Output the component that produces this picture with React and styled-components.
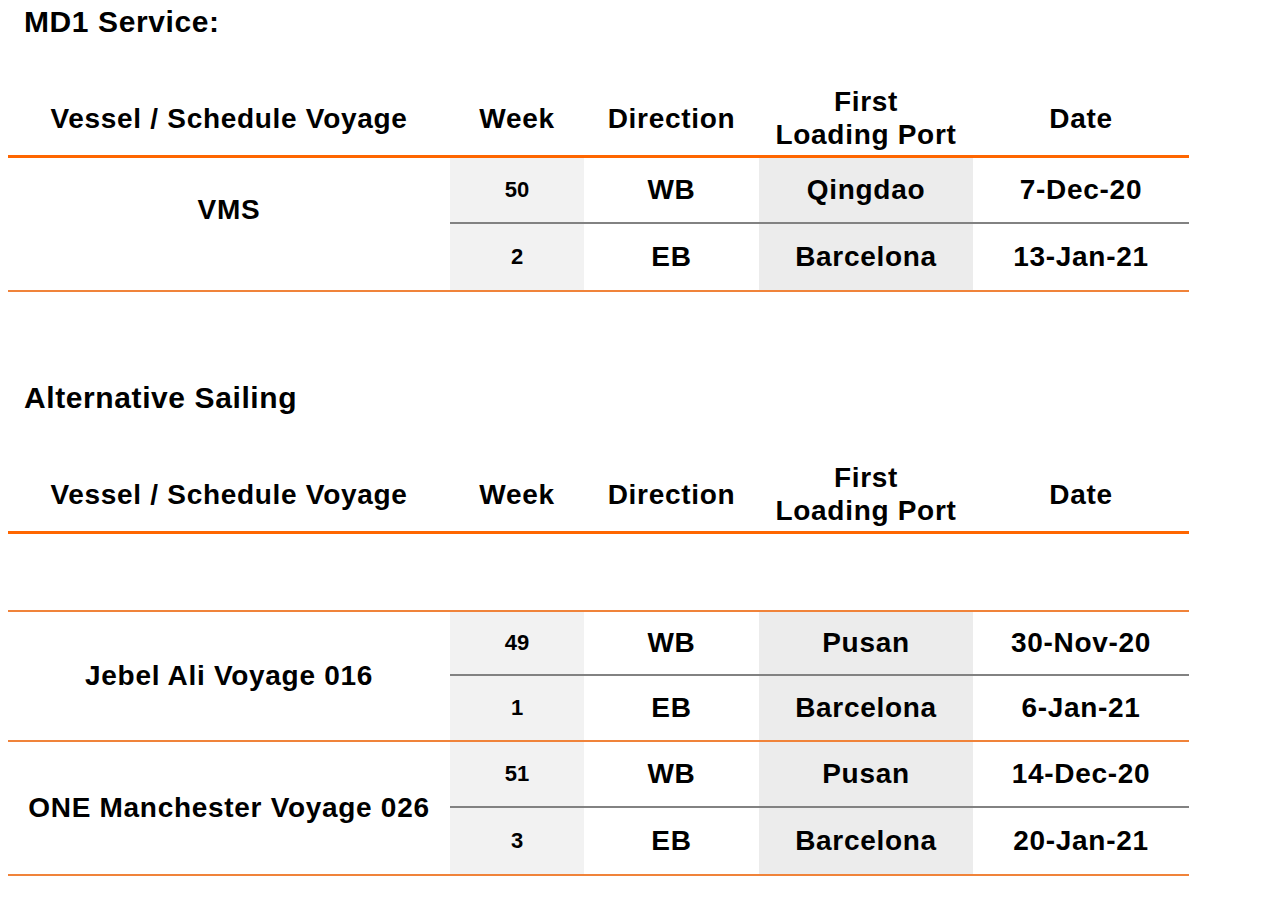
import styled, { createGlobalStyle } from "styled-components";

const GlobalStyle = createGlobalStyle`
  html, body {
    margin: 0;
    padding: 0;
    background: #ffffff;
  }
  body {
    font-family: "Liberation Sans", Arial, sans-serif;
    color: #000;
  }
`;

const columns = "442px 134px 175px 214px 216px";

const mdService = [
    {
        vessel: "VMS",
        raised: true,
        rowHeight: 66,
        legs: [
            { week: "50", dir: "WB", port: "Qingdao", date: "7-Dec-20" },
            { week: "2", dir: "EB", port: "Barcelona", date: "13-Jan-21" },
        ],
    },
];

const alternatives = [
    {
        vessel: "Jebel Ali Voyage 016",
        rowHeight: 64,
        legs: [
            { week: "49", dir: "WB", port: "Pusan", date: "30-Nov-20" },
            { week: "1", dir: "EB", port: "Barcelona", date: "6-Jan-21" },
        ],
    },
    {
        vessel: "ONE Manchester Voyage 026",
        rowHeight: 66,
        legs: [
            { week: "51", dir: "WB", port: "Pusan", date: "14-Dec-20" },
            { week: "3", dir: "EB", port: "Barcelona", date: "20-Jan-21" },
        ],
    },
];

const ScheduleTable = ( { groups, spacer } ) => (
    <Table>
        <HeadRow>
            <HeadCell>Vessel / Schedule Voyage</HeadCell>
            <HeadCell>Week</HeadCell>
            <HeadCell>Direction</HeadCell>
            <HeadCell>First<br />Loading Port</HeadCell>
            <HeadCell>Date</HeadCell>
        </HeadRow>
        {spacer && <Spacer />}
        {groups.map( group => (
            <Group key={group.vessel} $rowHeight={group.rowHeight}>
                <VesselCell $raised={group.raised}>{group.vessel}</VesselCell>
                {group.legs.map( ( leg, i ) => {
                    const divided = i < group.legs.length - 1;
                    return [
                        <WeekCell key={`w${i}`} $divided={divided}>{leg.week}</WeekCell>,
                        <Cell key={`d${i}`} $divided={divided}>{leg.dir}</Cell>,
                        <Cell key={`p${i}`} $divided={divided} $shade>{leg.port}</Cell>,
                        <Cell key={`t${i}`} $divided={divided}>{leg.date}</Cell>,
                    ];
                } )}
            </Group>
        ) )}
    </Table>
);

const App = () => (
    <>
        <GlobalStyle />
        <Page>
            <Title>MD1 Service:</Title>
            <ScheduleTable groups={mdService} />
            <Title $gapTop>Alternative Sailing</Title>
            <ScheduleTable groups={alternatives} spacer />
        </Page>
    </>
);

const Page = styled.div`
    padding: 0 0 20px 8px;
    width: 1181px;
`;

const Title = styled.h2`
    margin: ${p => ( p.$gapTop ? "86px" : "2px" )} 0 38px 16px;
    font-size: 30px;
    letter-spacing: 0.6px;
    line-height: 40px;
    font-weight: 700;
`;

const Table = styled.div`
    display: flex;
    flex-direction: column;
`;

const HeadRow = styled.div`
    display: grid;
    grid-template-columns: ${columns};
    height: 75px;
    border-bottom: 3px solid #ff6600;
`;

const HeadCell = styled.div`
    display: flex;
    align-items: center;
    justify-content: center;
    text-align: center;
    padding-top: 1px;
    font-size: 28px;
    letter-spacing: 0.7px;
    font-weight: 700;
    line-height: 33px;
`;

const Spacer = styled.div`
    height: 76px;
    border-bottom: 2px solid #f0833a;
`;

const Group = styled.div`
    display: grid;
    grid-template-columns: ${columns};
    grid-auto-rows: ${p => p.$rowHeight}px;
    border-bottom: 2px solid #f0833a;
`;

const VesselCell = styled.div`
    grid-row: span 2;
    display: flex;
    align-items: center;
    justify-content: center;
    padding-bottom: ${p => ( p.$raised ? "28px" : "0" )};
    font-size: 28px;
    letter-spacing: 0.7px;
    font-weight: 700;
`;

const Cell = styled.div`
    display: flex;
    align-items: center;
    justify-content: center;
    font-size: 28px;
    letter-spacing: 0.7px;
    font-weight: 700;
    background: ${p => ( p.$shade ? "#ececec" : "transparent" )};
    border-bottom: ${p => ( p.$divided ? "2px solid #828282" : "none" )};
`;

const WeekCell = styled( Cell )`
    font-size: 22px;
    letter-spacing: 0;
    background: #f2f2f2;
`;

export default App;
